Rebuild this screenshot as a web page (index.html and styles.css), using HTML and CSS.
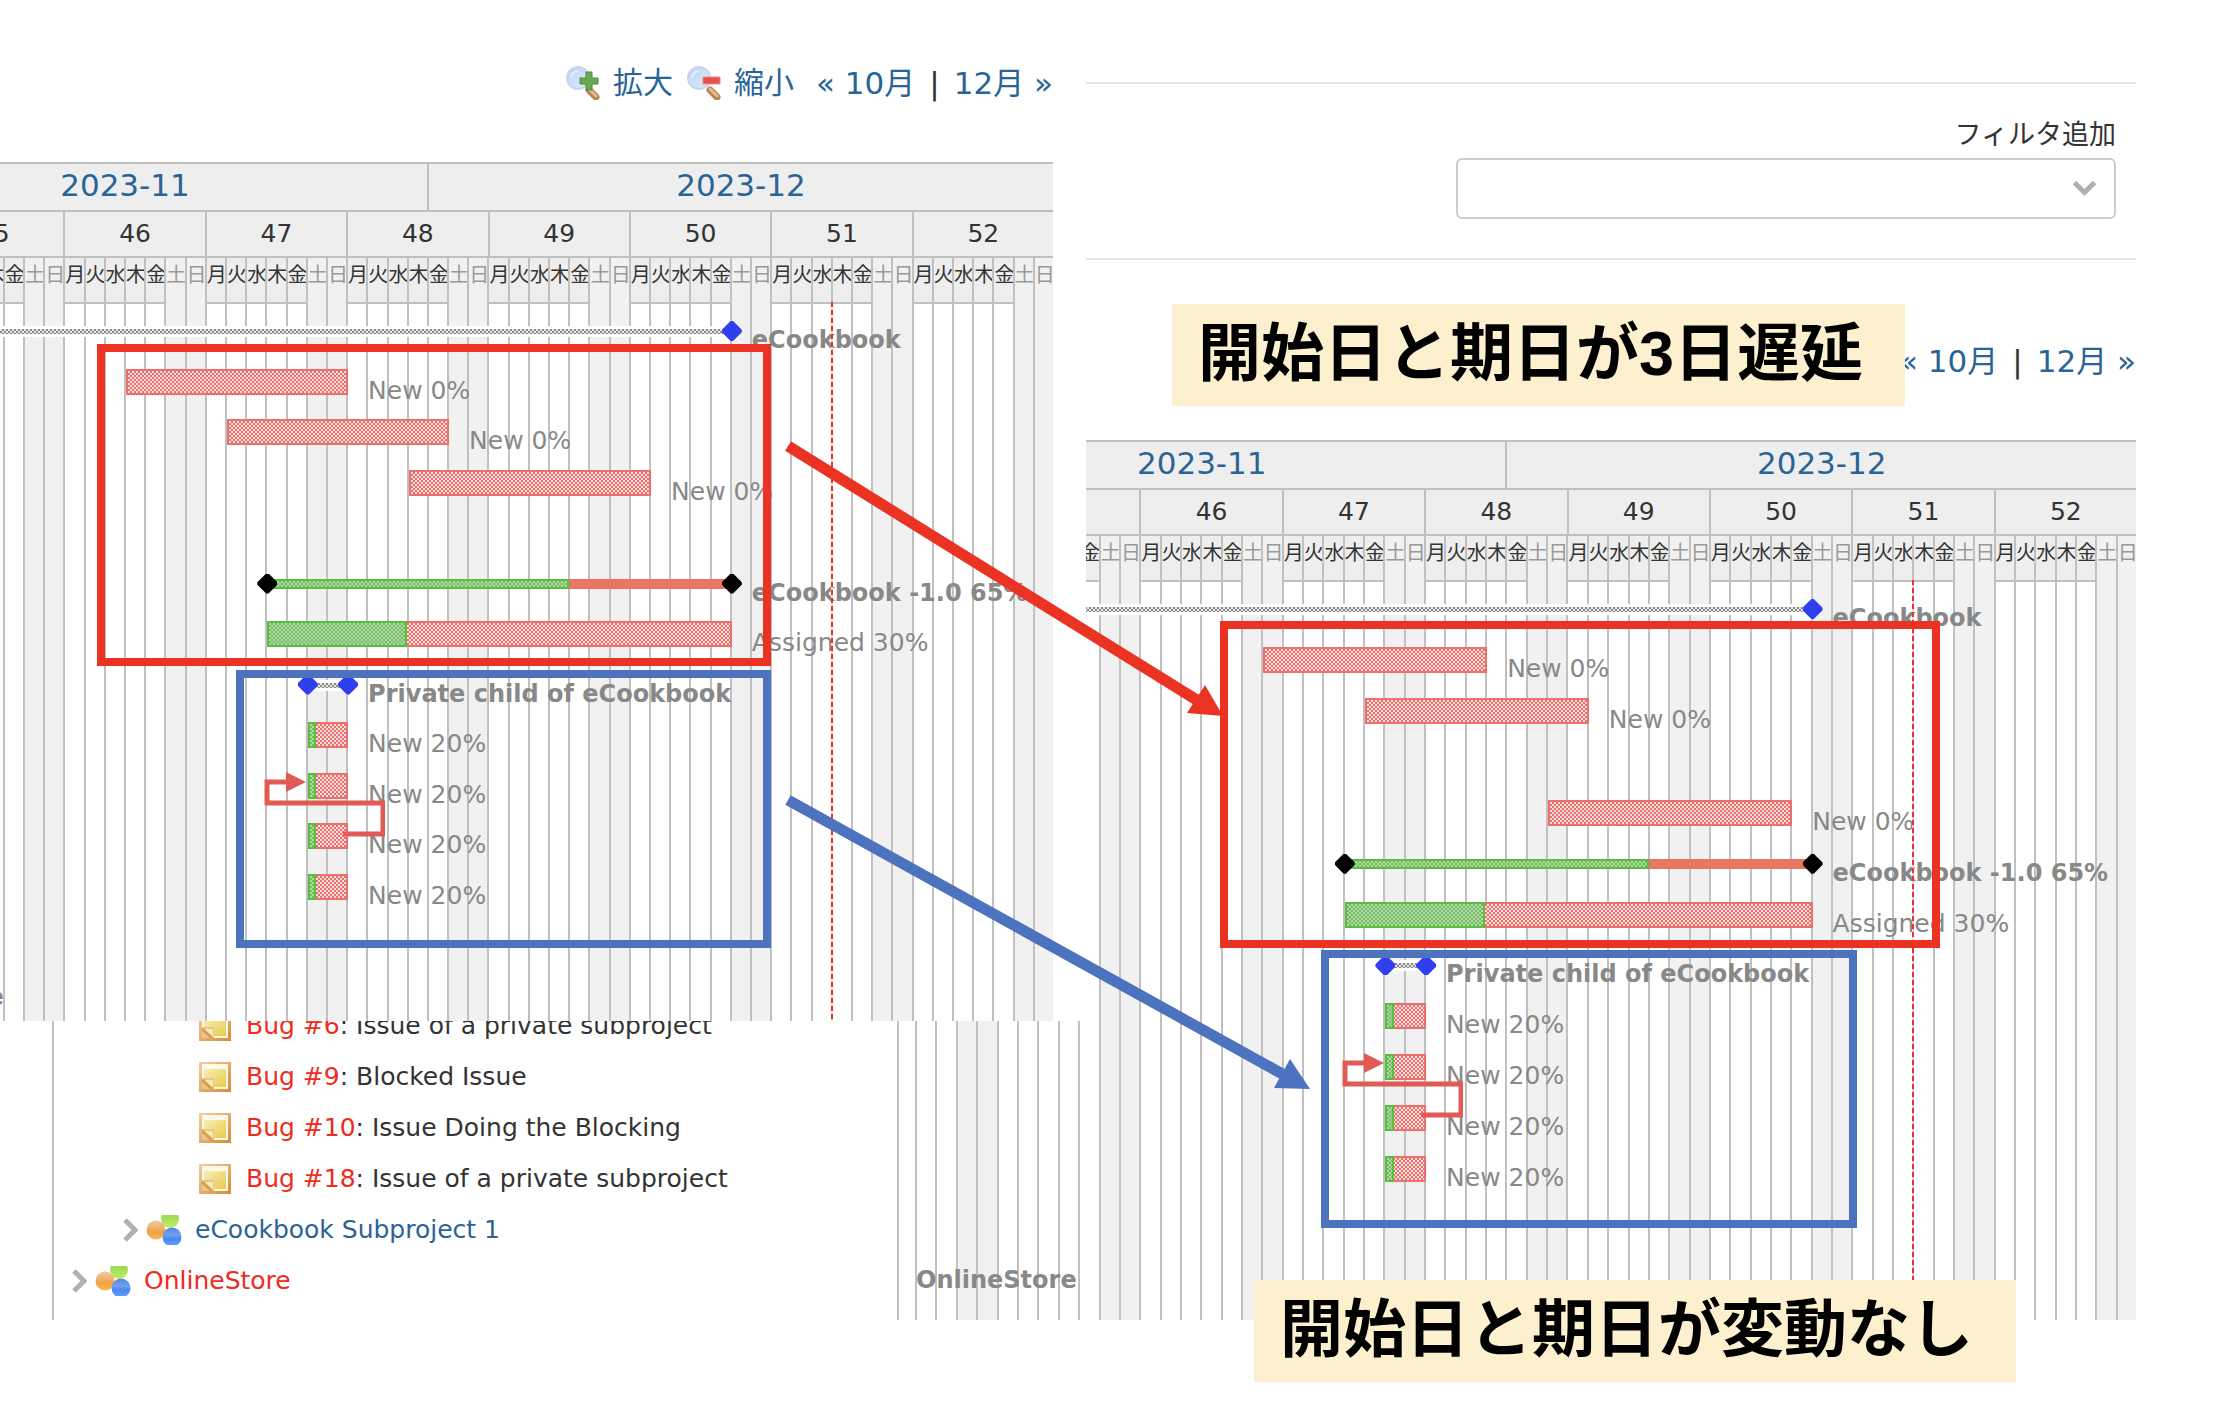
FILE: index.html
```html
<!DOCTYPE html>
<html lang="ja">

<head>
  <meta charset="utf-8">
  <title>ガントチャート</title>
  <link rel="stylesheet" href="styles.css">
</head>

<body>
  <svg class="symbols" width="0" height="0" aria-hidden="true">
    <defs>
      <linearGradient id="lens" x1="0" y1="0" x2="1" y2="1">
        <stop offset="0" stop-color="#b8d2f4"/><stop offset="1" stop-color="#e2eefc"/>
      </linearGradient>
      <linearGradient id="handle" x1="0" y1="1" x2="1" y2="0">
        <stop offset="0" stop-color="#9c6a3a"/><stop offset=".5" stop-color="#e6bd8c"/><stop offset="1" stop-color="#a8743f"/>
      </linearGradient>
      <linearGradient id="noteEdge" x1="0" y1="0" x2="1" y2="1">
        <stop offset="0" stop-color="#f0cfa4"/><stop offset="1" stop-color="#d98a38"/>
      </linearGradient>
      <linearGradient id="noteFill" x1="0" y1="0" x2="1" y2="1">
        <stop offset="0" stop-color="#f7efb4"/><stop offset="1" stop-color="#e9ca4c"/>
      </linearGradient>
      <linearGradient id="orange" x1="0" y1="0" x2="0" y2="1">
        <stop offset="0" stop-color="#f3c8a0"/><stop offset=".4" stop-color="#f0b070"/><stop offset=".6" stop-color="#f2a23c"/><stop offset="1" stop-color="#f7b85c"/>
      </linearGradient>
      <linearGradient id="green" x1="0" y1="0" x2="0" y2="1">
        <stop offset="0" stop-color="#8fd058"/><stop offset=".5" stop-color="#a6e05a"/><stop offset="1" stop-color="#bdf05f"/>
      </linearGradient>
      <linearGradient id="blue" x1="0" y1="0" x2="0" y2="1">
        <stop offset="0" stop-color="#5a88d8"/><stop offset=".4" stop-color="#6f9ff0"/><stop offset=".6" stop-color="#4a86f0"/><stop offset="1" stop-color="#66a4ff"/>
      </linearGradient>
    </defs>
    <symbol id="icon-zoom" viewBox="0 0 34 34">
      <path d="M23 24l7 7" stroke="#b58350" stroke-width="7" stroke-linecap="round"/>
      <path d="M23 23l7 7" stroke="#e3bc8e" stroke-width="3" stroke-linecap="round"/>
      <circle cx="12" cy="12" r="11" fill="url(#lens)" stroke="#c6d6ee" stroke-width="2"/>
      <path d="M5 12a7 7 0 0 1 7-7" fill="none" stroke="#e6f0fd" stroke-width="2"/>
    </symbol>
    <symbol id="icon-issue" viewBox="0 0 32 30">
      <path d="M0 0h32v30H0z" fill="url(#noteEdge)"/>
      <path d="M3 2h26v25H3z" fill="#fdf8e8"/>
      <path d="M5 7h22v18H5z" fill="url(#noteFill)"/>
      <path d="M3 16h12v11H3z" fill="#e8c58a"/>
      <path d="M5 18h9v8z" fill="#f5e9b8"/>
      <path d="M3 18l10 9" stroke="#d99b4c" stroke-width="3"/>
    </symbol>
    <symbol id="icon-project" viewBox="0 0 36 30">
      <circle cx="24" cy="4" r="9" fill="url(#green)"/>
      <circle cx="10" cy="15" r="9.500" fill="url(#orange)"/>
      <circle cx="26" cy="22" r="9.500" fill="url(#blue)"/>
    </symbol>
    <symbol id="icon-expander" viewBox="0 0 15 24">
      <path d="M2 2l10 10L2 22" fill="none" stroke="#b0b0b0" stroke-width="5"/>
    </symbol>
    <symbol id="icon-relation" viewBox="0 0 122 66">
      <path d="M30 10H4v21h116v31H80" fill="none" stroke="#e05b55" stroke-width="5"/>
      <path d="M23 0l20 10-20 10z" fill="#e05b55"/>
    </symbol>
  </svg>

  <div class="wrapper">
    <div class="before">
      <div class="contextual">
        <a href="#" class="icon"><svg class="icon-zoom"><use href="#icon-zoom"/><path d="M20 6h6v6h6v6h-6v6h-6v-6h-6v-6h6z" fill="#6aa855" stroke="#468c3c" stroke-width="1"/></svg>拡大</a>
        <a href="#" class="icon"><svg class="icon-zoom"><use href="#icon-zoom"/><path d="M16 11h17v7H16z" fill="#e45050" stroke="#ee8a86" stroke-width="1"/></svg>縮小</a>
        <span class="pager"><a href="#">« 10月</a><span>|</span><a href="#">12月 »</a></span>
      </div>
      <div class="gantt gantt-before" data-plan="before"></div>
      <div class="subjects">
        <ul class="tree">
          <li class="issue"><svg class="icon-issue"><use href="#icon-issue"/></svg><span><a href="#">Bug #6</a>: Issue of a private subproject</span></li>
          <li class="issue"><svg class="icon-issue"><use href="#icon-issue"/></svg><span><a href="#">Bug #9</a>: Blocked Issue</span></li>
          <li class="issue"><svg class="icon-issue"><use href="#icon-issue"/></svg><span><a href="#">Bug #10</a>: Issue Doing the Blocking</span></li>
          <li class="issue"><svg class="icon-issue"><use href="#icon-issue"/></svg><span><a href="#">Bug #18</a>: Issue of a private subproject</span></li>
          <li class="project subproject"><svg class="icon-expander"><use href="#icon-expander"/></svg><svg class="icon-project"><use href="#icon-project"/></svg><a href="#">eCookbook Subproject 1</a></li>
          <li class="project overdue"><svg class="icon-expander"><use href="#icon-expander"/></svg><svg class="icon-project"><use href="#icon-project"/></svg><a href="#">OnlineStore</a></li>
        </ul>
        <div class="strip">
          <i></i><i></i><i></i><i class="nwday"></i><i class="nwday"></i><i></i><i></i><i></i><i></i>
          <span class="strip-label">OnlineStore</span>
        </div>
      </div>
    </div>

    <div class="after">
      <div class="filters">
        <label for="add_filter_select">フィルタ追加</label>
        <div class="select">
          <select id="add_filter_select"><option></option></select>
          <svg class="icon-expander"><use href="#icon-expander"/></svg>
        </div>
      </div>
      <div class="contextual">
        <span class="pager"><a href="#">« 10月</a><span>|</span><a href="#">12月 »</a></span>
      </div>
      <div class="gantt gantt-after" data-plan="after"></div>
    </div>

    <svg class="marks" viewBox="0 0 2216 1422">
      <g fill="none" stroke-width="8">
        <path class="mark-red" d="M101 348h666v314H101z"/>
        <path class="mark-blue" d="M240 674h527v270H240z"/>
        <path class="mark-red" d="M1224 625h712v319h-712z"/>
        <path class="mark-blue" d="M1325 954h528v270h-528z"/>
      </g>
      <path class="mark-red" d="M788 446l412 256" stroke-width="11"/>
      <path class="head-red" d="M1223 716l-36-3 18-28z"/>
      <path class="mark-blue" d="M788 800l498 276" stroke-width="11"/>
      <path class="head-blue" d="M1310 1089l-36-1 16-29z"/>
    </svg>
    <div class="note note-delayed">開始日と期日が3日遅延</div>
    <div class="note note-kept">開始日と期日が変動なし</div>
  </div>

  <script src="script.js"></script>
</body>

</html>
```
FILE: styles.css
```css
* {
  box-sizing: border-box;
}

body {
  margin: 0;
  background: #fff;
  color: #333;
  font-family: "DejaVu Sans", "Noto Sans CJK JP", sans-serif;
  font-size: 25px;
  line-height: 28px;
}

a {
  color: #2a6496;
  text-decoration: none;
}

.symbols {
  position: absolute;
}

.wrapper {
  position: relative;
  display: grid;
  grid-template-columns: 1086fr 1050fr 80fr;
  min-height: 1422px;
  overflow: hidden;
}

.before {
  padding-top: 62px;
}

.before .contextual,
.before .gantt {
  margin-right: 33px;
}

.after {
  padding-top: 82px;
}

/* zoom and month links */
.contextual {
  display: flex;
  justify-content: flex-end;
  gap: 14px;
  margin-bottom: 58px;
  font-size: 30px;
  line-height: 42px;
}

.contextual .icon {
  display: flex;
  align-items: center;
  gap: 13px;
}

.icon-zoom {
  width: 34px;
  height: 34px;
}

.pager {
  display: flex;
  gap: 14px;
  margin-left: 8px;
  font-size: 31px;
}

/* filters */
.filters {
  display: flex;
  flex-direction: column;
  align-items: flex-end;
  gap: 3px;
  margin-bottom: 80px;
  padding: 31px 20px 39px;
  border-top: 2px solid #e4e4e4;
  border-bottom: 2px solid #e4e4e4;
}

.filters label {
  font-size: 27px;
  line-height: 40px;
}

.select {
  position: relative;
  width: 660px;
}

.select select {
  display: block;
  width: 100%;
  height: 61px;
  border: 2px solid #ccc;
  border-radius: 6px;
  background: #fff;
  appearance: none;
}

.select .icon-expander {
  position: absolute;
  top: 18px;
  right: 24px;
  transform: rotate(90deg);
  pointer-events: none;
}

/* gantt */
.gantt {
  position: relative;
  overflow: hidden;
  border-top: 2px solid #c0c0c0;
}

/* the scale starts on Monday of week 45, left of the visible part */
.scale {
  position: relative;
  margin-right: -2px;
}

.gantt-before .scale {
  margin-left: -76px;
}

.gantt-after .scale {
  margin-left: -87px;
}

.months {
  display: grid;
  grid-template-columns: 25fr 31fr;
  background: #eee;
}

.month {
  height: 48px;
  border-right: 2px solid #c0c0c0;
  border-bottom: 2px solid #c0c0c0;
  font-size: 31px;
  line-height: 42px;
  text-align: center;
}

.month:first-child {
  margin-left: -101px;
}

.weeks {
  display: grid;
  grid-template-columns: repeat(8, 1fr);
}

.week-no {
  height: 46px;
  border-right: 2px solid #c0c0c0;
  border-bottom: 2px solid #c0c0c0;
  background: #eee;
  line-height: 44px;
  text-align: center;
}

.days {
  display: grid;
  grid-template-columns: repeat(56, 1fr);
}

.day {
  min-width: 0;
  border-right: 2px solid #c0c0c0;
}

.gantt-before .day {
  height: 763px;
}

.gantt-after .day {
  height: 784px;
}

.day span {
  display: block;
  height: 46px;
  overflow: hidden;
  border-bottom: 2px solid #c0c0c0;
  background: #eee;
  font-family: "Noto Sans CJK JP", sans-serif;
  font-size: 20px;
  line-height: 32px;
}

.day.nwday {
  background: #f1f1f1;
}

.day.nwday span {
  border-bottom: 0;
  background: none;
  color: #999;
}

.rows {
  position: absolute;
  top: 154px;
  left: 0;
  width: 100%;
  display: grid;
  grid-template-rows: repeat(14, 1fr);
}

.gantt-before .rows {
  height: 707px;
}

.gantt-after .rows {
  height: 713px;
}

.row {
  position: relative;
}

.task {
  position: absolute;
  top: 0;
  left: calc(var(--start) / 56 * 100%);
  width: calc(var(--days) / 56 * 100%);
  height: 26px;
}

.task-todo,
.task-done {
  position: absolute;
  top: 0;
  left: 0;
  width: 100%;
  height: 26px;
  border: 2px solid #ee706c;
  background: conic-gradient(#ee706c 25%, #fbdedd 0 50%, #ee706c 0 75%, #fbdedd 0) 0 0 / 4px 4px;
}

.task-done {
  border-color: #57bf3c;
  background: conic-gradient(#6fc25a 25%, #b7d4b1 0 50%, #6fc25a 0 75%, #b7d4b1 0) 0 0 / 4px 4px;
}

.version .task-todo,
.version .task-done {
  top: 8px;
  height: 10px;
}

.version .task-todo {
  background: #e8795a;
}

.project-row .task-todo {
  top: 8px;
  height: 11px;
  border: solid #fff;
  border-width: 3px 0;
  background: conic-gradient(#8a8a8a 25%, #e6e6e6 0 50%, #8a8a8a 0 75%, #e6e6e6 0) 0 0 / 4px 4px;
}

.marker {
  position: absolute;
  top: 3px;
  width: 20px;
  height: 20px;
  margin-left: -10px;
  background: #2f3fee;
  clip-path: polygon(44% 0, 56% 0, 100% 44%, 100% 56%, 56% 100%, 44% 100%, 0 56%, 0 44%);
}

.marker-end {
  left: 100%;
}

.version .marker {
  background: #000;
}

.task-label {
  position: absolute;
  top: 8px;
  left: 100%;
  margin-left: 20px;
  color: #888;
  white-space: nowrap;
}

.project-row .task-label,
.version .task-label,
.strip-label {
  font-size: 24px;
  font-weight: bold;
}

.relation {
  position: absolute;
  top: -1px;
  left: calc(17 / 56 * 100%);
  z-index: 1;
  width: 122px;
  height: 66px;
  margin-left: -4px;
}

.today {
  position: absolute;
  top: 138px;
  bottom: 0;
  left: calc(45 / 56 * 100%);
  width: 2px;
  margin-left: -2px;
  background: repeating-linear-gradient(#f03028 0 5px, #ddd 5px 8px);
}

/* subjects */
.subjects {
  display: grid;
  grid-template-columns: 52px 1fr 189px;
  height: 299px;
  overflow: hidden;
}

.tree {
  grid-column: 2;
  margin: -21px 0 0;
  padding: 0;
  border-left: 2px solid #c0c0c0;
  list-style: none;
}

.tree li {
  display: flex;
  align-items: center;
  height: 51px;
  padding-left: 18px;
}

.tree .issue {
  gap: 15px;
  padding-left: 145px;
}

.tree .subproject {
  padding-left: 69px;
}

.tree .issue a,
.tree .overdue a {
  color: #ee2c20;
}

.icon-issue {
  width: 32px;
  height: 30px;
}

.icon-project {
  width: 36px;
  height: 30px;
  margin: 0 13px 0 8px;
}

.icon-expander {
  width: 15px;
  height: 24px;
}

.strip {
  position: relative;
  display: grid;
  grid-template-columns: 18px repeat(8, 1fr);
  margin-right: 6px;
  border-left: 2px solid #c0c0c0;
}

.strip i {
  border-right: 2px solid #c0c0c0;
}

.strip .nwday {
  background: #f1f1f1;
}

.strip-label {
  position: absolute;
  bottom: 26px;
  left: 17px;
  color: #888;
}

/* annotations */
.marks {
  position: absolute;
  top: 0;
  left: 0;
  width: 100%;
  pointer-events: none;
}

.mark-red {
  stroke: #ea3323;
}

.mark-blue {
  stroke: #4d72be;
}

.head-red {
  fill: #ea3323;
}

.head-blue {
  fill: #4d72be;
}

.note {
  position: absolute;
  height: 102px;
  padding-left: 26px;
  background: #fcf0cf;
  color: #000;
  font: bold 63px/98px "Liberation Sans", "Noto Sans CJK JP", sans-serif;
  white-space: nowrap;
}

.note-delayed {
  top: 304px;
  left: 1172px;
  width: 733px;
}

.note-kept {
  top: 1280px;
  left: 1254px;
  width: 762px;
}
```
FILE: script.js
```js
// start and days are counted from Monday of week 45
var common = [
  { row: 0, type: 'project-row', start: 0, days: 40, label: 'eCookbook', markers: 1 },
  { row: 5, type: 'version', start: 17, days: 23, done: 65, label: 'eCookbook -1.0 65%', markers: 2 },
  { row: 6, start: 17, days: 23, done: 30, label: 'Assigned 30%' },
  { row: 7, type: 'project-row', start: 19, days: 2, label: 'Private child of eCookbook', markers: 2 },
  { row: 8, start: 19, days: 2, done: 20, label: 'New 20%' },
  { row: 9, start: 19, days: 2, done: 20, label: 'New 20%', relation: true },
  { row: 10, start: 19, days: 2, done: 20, label: 'New 20%' },
  { row: 11, start: 19, days: 2, done: 20, label: 'New 20%' }
];

var plans = {
  before: common.concat([
    { row: 1, start: 10, days: 11, label: 'New 0%' },
    { row: 2, start: 15, days: 11, label: 'New 0%' },
    { row: 3, start: 24, days: 12, label: 'New 0%' },
    { row: 13, type: 'project-row', start: -7, days: 2, label: 'OnlineStore', markers: 2 }
  ]),
  after: common.concat([
    { row: 1, start: 13, days: 11, label: 'New 0%' },
    { row: 2, start: 18, days: 11, label: 'New 0%' },
    { row: 4, start: 27, days: 12, label: 'New 0%' }
  ])
};

function taskHtml(t) {
  var html = '<div class="task" style="--start:' + t.start + ';--days:' + t.days + '">' +
    '<div class="task-todo"></div>';
  if (t.done) {
    html += '<div class="task-done" style="width:' + t.done + '%"></div>';
  }
  if (t.markers === 2) {
    html += '<div class="marker"></div>';
  }
  if (t.markers) {
    html += '<div class="marker marker-end"></div>';
  }
  html += '<div class="task-label">' + t.label + '</div></div>';
  if (t.relation) {
    html += '<svg class="relation"><use href="#icon-relation"/></svg>';
  }
  return html;
}

function drawGantt(el) {
  var tasks = plans[el.dataset.plan];
  var html = '<div class="scale"><div class="months">' +
    '<div class="month"><a href="#">2023-11</a></div><div class="month"><a href="#">2023-12</a></div></div>';

  html += '<div class="weeks">';
  for (var w = 45; w <= 52; w++) {
    html += '<div class="week-no">' + w + '</div>';
  }
  html += '</div><div class="days">';
  for (var d = 0; d < 56; d++) {
    html += '<div class="day' + (d % 7 > 4 ? ' nwday' : '') + '"><span>' + '月火水木金土日'[d % 7] + '</span></div>';
  }
  html += '</div><div class="rows">';
  for (var r = 0; r < 14; r++) {
    var task = tasks.filter(function (t) { return t.row === r; })[0];
    html += '<div class="row ' + (task && task.type || '') + '">' + (task ? taskHtml(task) : '') + '</div>';
  }
  html += '</div><div class="today"></div></div>';
  el.innerHTML = html;
}

document.querySelectorAll('.gantt').forEach(drawGantt);
```
